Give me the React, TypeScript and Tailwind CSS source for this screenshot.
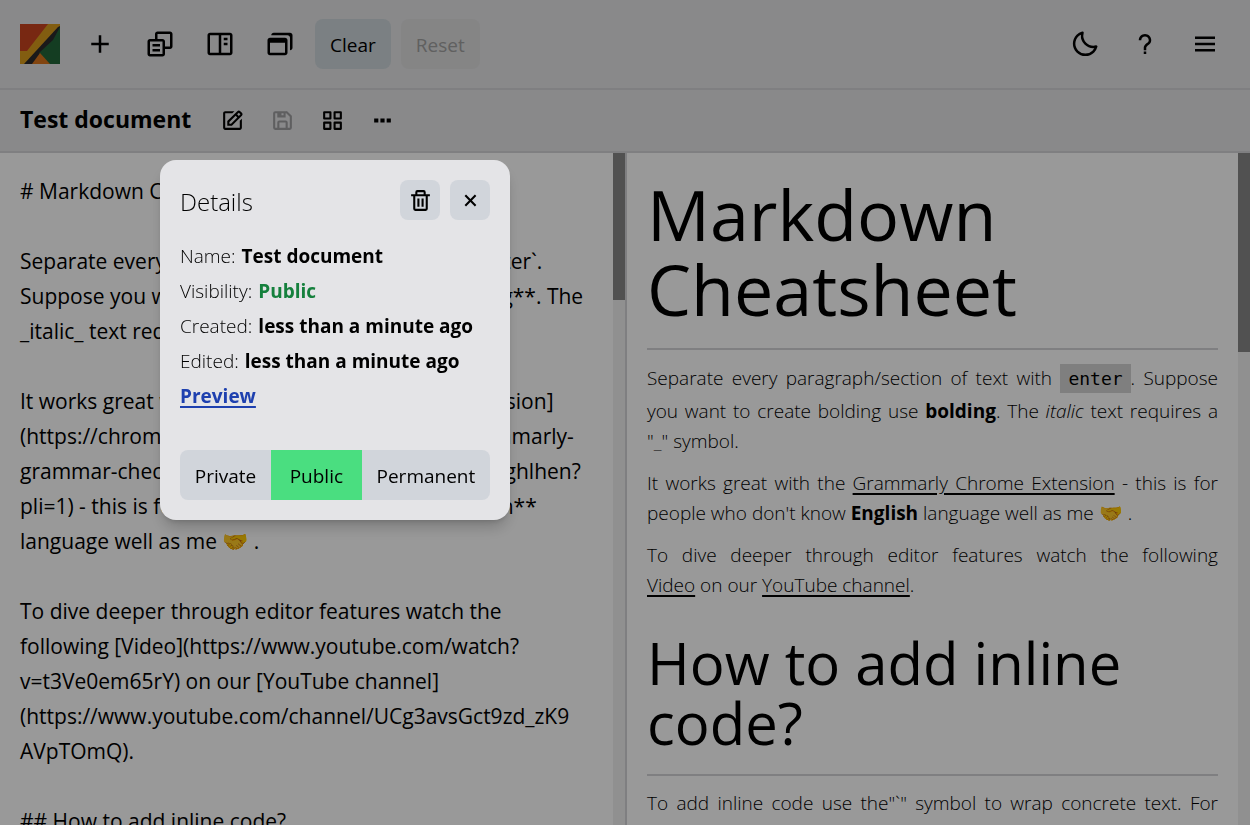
import type { ReactNode } from "react";
import {
  BiBookContent,
  BiCopyAlt,
  BiDotsHorizontal,
  BiEdit,
  BiGridAlt,
  BiMenu,
  BiMoon,
  BiPlus,
  BiQuestionMark,
  BiSave,
  BiTrash,
  BiWindows,
  BiX,
} from "react-icons/bi";

const SOURCE = `# Markdown Cheatsheet

Separate every paragraph/section of text with \`enter\`.
Suppose you want to create bolding use **bolding**. The
_italic_ text requires a "_" symbol.

It works great with the [Grammarly Chrome Extension]
(https://chrome.google.com/webstore/detail/grammarly-
grammar-checker-a/kbfnbcaeplbcioakkpcpgfkobkghlhen?
pli=1) - this is for people who don't know **English**
language well as me 🤝 .

To dive deeper through editor features watch the
following [Video](https://www.youtube.com/watch?
v=t3Ve0em65rY) on our [YouTube channel]
(https://www.youtube.com/channel/UCg3avsGct9zd_zK9
AVpTOmQ).

## How to add inline code?
`;

function Logo() {
  return (
    <svg viewBox="0 0 40 40" className="mr-[5px] size-10 shrink-0" aria-label="Home">
      <rect width="40" height="40" fill="#c8441f" />
      <path d="M28 0h12v4L8 40H0V27h7z" fill="#d99c1c" />
      <path d="M38 3l2-1v10L14 40H4z" fill="#2c2a2c" />
      <path d="M40 3v37H29L19 29 33 16z" fill="#22663a" />
      <path d="M20 29l10 11H12z" fill="#d9741c" />
    </svg>
  );
}

function IconButton({ label, small, disabled, children }: { label: string; small?: boolean; disabled?: boolean; children: ReactNode }) {
  return (
    <button
      type="button"
      aria-label={label}
      disabled={disabled}
      className={`flex shrink-0 items-center justify-center disabled:opacity-30 ${small ? "size-10 text-[25px]" : "size-[50px] text-[30px]"}`}
    >
      {children}
    </button>
  );
}

function Scrollbar({ thumb }: { thumb: string }) {
  return (
    <div className="w-3 shrink-0 bg-[#f1f1f1]">
      <div className={`bg-[#888888] ${thumb}`} />
    </div>
  );
}

function Detail({ label, children }: { label: string; children: ReactNode }) {
  return (
    <div className="flex gap-[6px]">
      <dt className="font-light">{label}:</dt>
      <dd className="font-bold">{children}</dd>
    </div>
  );
}

export default function App() {
  return (
    <div className="flex h-screen flex-col overflow-hidden bg-white font-['Open_Sans','Noto_Sans',sans-serif] text-black">
      <header className="flex h-[90px] shrink-0 items-center gap-[10px] border-b-2 border-[#d4d4d8] bg-[#e4e4e7] px-5">
        <Logo />
        <IconButton label="New document"><BiPlus /></IconButton>
        <IconButton label="Copy"><BiCopyAlt /></IconButton>
        <IconButton label="Side by side"><BiBookContent /></IconButton>
        <IconButton label="Windows"><BiWindows /></IconButton>
        <button type="button" className="h-[50px] rounded-lg bg-[#cdd6da] px-[15px] pt-0.5 text-[19px] font-medium">Clear</button>
        <button type="button" disabled className="h-[50px] rounded-lg bg-[#dedede] px-[15px] pt-0.5 text-[19px] font-medium text-[#a0a0a0]">Reset</button>
        <div className="ml-auto flex gap-[10px]">
          <IconButton label="Dark mode"><BiMoon /></IconButton>
          <IconButton label="Help"><BiQuestionMark /></IconButton>
          <IconButton label="Menu"><BiMenu /></IconButton>
        </div>
      </header>

      <div className="flex h-[63px] shrink-0 items-center gap-[10px] border-b-2 border-[#d4d4d8] bg-[#e4e4e7] px-5">
        <h1 className="mr-[11px] pb-0.5 text-[23px] font-bold">Test document</h1>
        <IconButton small label="Edit"><BiEdit /></IconButton>
        <IconButton small disabled label="Save"><BiSave /></IconButton>
        <IconButton small label="Documents"><BiGridAlt /></IconButton>
        <IconButton small label="More"><BiDotsHorizontal /></IconButton>
      </div>

      <main className="grid min-h-0 flex-1 grid-cols-2">
        <section className="flex min-h-0 overflow-hidden">
          <textarea
            aria-label="Markdown source"
            defaultValue={SOURCE}
            spellCheck={false}
            className="min-w-0 flex-1 resize-none overflow-hidden whitespace-pre bg-white px-5 pt-[21px] text-[21px] leading-[35px] outline-none"
          />
          <Scrollbar thumb="h-[147px]" />
        </section>

        <section className="flex min-h-0 overflow-hidden border-l-2 border-[#d4d4d8]">
          <article className="min-w-0 flex-1 overflow-hidden px-5 pt-6 text-justify text-[19px] leading-[30px] font-light [&_a]:underline [&_a]:decoration-2 [&_a]:underline-offset-3 [&_p]:mt-3">
            <h2 className="border-b-2 border-[#d4d4d8] pb-[21px] text-left text-[70px] leading-[75px] font-normal">
              Markdown Cheatsheet
            </h2>
            <p>
              Separate every paragraph/section of text with{" "}
              <code className="bg-[#d4d4d4] px-2 py-1 font-['DejaVu_Sans_Mono',monospace] text-lg leading-[34px] font-normal">enter</code>. Suppose you want to create
              bolding use <strong className="font-bold">bolding</strong>. The <em>italic</em> text requires a "_" symbol.
            </p>
            <p>
              It works great with the <a href="#grammarly">Grammarly Chrome Extension</a> - this is for people who don't know{" "}
              <strong className="font-bold">English</strong> language well as me 🤝 .
            </p>
            <p>
              To dive deeper through editor features watch the following{" "}
              <span className="whitespace-nowrap">
                <a href="#video">Video</a> on our <a href="#channel">YouTube channel</a>.
              </span>
            </p>
            <h2 className="mt-[33px] border-b-2 border-[#d4d4d8] pb-[21px] text-left text-[58px] leading-[60px] font-normal">
              How to add inline code?
            </h2>
            <p>
              To add inline code use the"`" symbol to wrap concrete text. For example, `const` is shown as code inside of a sentence.
            </p>
          </article>
          <Scrollbar thumb="h-[199px]" />
        </section>
      </main>

      <div className="fixed inset-0 bg-black/40">
        <div
          role="dialog"
          aria-labelledby="details-title"
          className="absolute top-40 left-40 w-[350px] rounded-2xl bg-[#e4e4e7] p-5 shadow-lg shadow-black/20"
        >
          <div className="flex h-10 items-center gap-[10px]">
            <h2 id="details-title" className="mr-auto pt-1 text-2xl font-light">Details</h2>
            <button type="button" aria-label="Delete" className="flex size-10 items-center justify-center rounded-lg bg-[#d1d5db] text-[25px]"><BiTrash /></button>
            <button type="button" aria-label="Close" className="flex size-10 items-center justify-center rounded-lg bg-[#d1d5db] text-[25px]"><BiX /></button>
          </div>
          <dl className="mt-[19px] text-[19px] leading-[35px]">
            <Detail label="Name">Test document</Detail>
            <Detail label="Visibility"><span className="text-[#15803d]">Public</span></Detail>
            <Detail label="Created">less than a minute ago</Detail>
            <Detail label="Edited">less than a minute ago</Detail>
          </dl>
          <a href="#preview" className="block text-[19px] leading-[35px] font-bold text-[#1e40af] underline decoration-2 underline-offset-3">Preview</a>
          <div className="mt-9 flex h-[50px] overflow-hidden rounded-lg bg-[#d1d5db] text-[19px] font-medium">
            <button type="button" className="flex-auto pt-0.5">Private</button>
            <button type="button" className="flex-auto bg-[#4ade80] px-1 pt-0.5">Public</button>
            <button type="button" className="flex-auto pt-0.5">Permanent</button>
          </div>
        </div>
      </div>
    </div>
  );
}
